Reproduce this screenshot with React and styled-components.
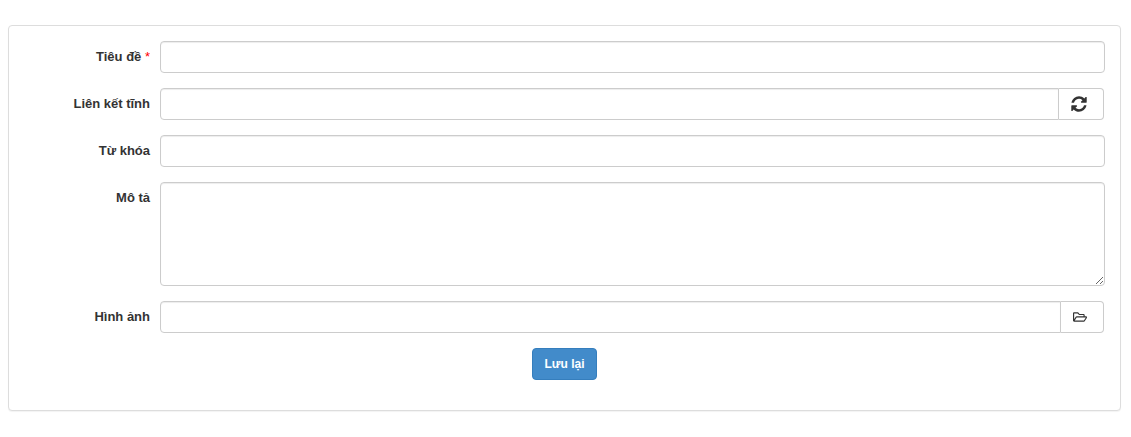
import React from 'react'
import styled, { createGlobalStyle } from 'styled-components';
import { FaRegFolderOpen } from 'react-icons/fa';

const GlobalStyle = createGlobalStyle`
    * {
        box-sizing: border-box;
    }
    body {
        margin: 0;
        background: #fff;
        font-family: "Liberation Sans", Arial, sans-serif;
        font-size: 13px;
        color: #333;
    }
`;

const Page = styled.div`
    padding: 25px 10px 26px 8px;
`;

const Panel = styled.form`
    height: 386px;
    padding: 15px 15px 0;
    background: #fff;
    border: 1px solid #ddd;
    border-radius: 4px;
    box-shadow: 0 1px 1px rgba(0, 0, 0, 0.05);
    display: flex;
    flex-direction: column;
    gap: 15px;
`;

const Row = styled.div`
    display: flex;
`;

const Label = styled.label`
    width: 126px;
    padding-top: 7px;
    line-height: 18px;
    text-align: right;
    font-weight: 700;
    flex: none;
`;

const Field = styled.div`
    flex: 1;
    margin-left: 10px;
    display: flex;
    min-width: 0;
`;

const TextInput = styled.input`
    flex: 1;
    min-width: 0;
    height: 32px;
    padding: 6px 12px;
    background: #fff;
    border: 1px solid #ccc;
    border-radius: ${(p) => (p.$grouped ? '4px 0 0 4px' : '4px')};
    box-shadow: inset 0 1px 1px rgba(0, 0, 0, 0.075);
    font: inherit;
    outline: none;
`;

const TextArea = styled.textarea`
    flex: 1;
    display: block;
    height: 104px;
    padding: 6px 12px;
    background: #fff;
    border: 1px solid #ccc;
    border-radius: 4px;
    box-shadow: inset 0 1px 1px rgba(0, 0, 0, 0.075);
    font: inherit;
    outline: none;
`;

const Addon = styled.span`
    flex: none;
    width: ${(p) => p.$width}px;
    height: 32px;
    margin-right: 1px;
    padding-right: 4px;
    background: #fff;
    border: 1px solid #ccc;
    border-left: 0;
    border-radius: 0 4px 4px 0;
    display: flex;
    align-items: center;
    justify-content: center;
    color: #333;
    font-size: ${(p) => p.$size}px;

    svg {
        display: block;
    }
`;

const Required = styled.span`
    color: #f00;
    font-weight: 400;
`;

const Actions = styled.div`
    display: flex;
    justify-content: center;
`;

const SaveButton = styled.button`
    width: 65px;
    height: 32px;
    padding: 0;
    background: #428bca;
    border: 1px solid #357ebd;
    border-radius: 4px;
    color: #fff;
    font: 700 12px "Liberation Sans", Arial, sans-serif;
`;

const RefreshIcon = () => (
    <svg width="18" height="18" viewBox="0 0 1792 1792" fill="currentColor">
        <path d="M1639 1056q0 5-1 7-64 268-268 434.500t-478 166.500q-146 0-282.500-55t-243.500-157l-129 129q-19 19-45 19t-45-19-19-45v-448q0-26 19-45t45-19h448q26 0 45 19t19 45-19 45l-137 137q71 66 161 102t187 36q134 0 250-65t186-179q11-17 53-117 8-23 30-23h192q13 0 22.500 9.500t9.500 22.500zm25-800v448q0 26-19 45t-45 19h-448q-26 0-45-19t-19-45 19-45l138-138q-148-137-349-137-134 0-250 65t-186 179q-11 17-53 117-8 23-30 23h-199q-13 0-22.500-9.500t-9.500-22.500v-7q65-268 270-434.500t480-166.500q146 0 284 55.500t245 156.500l130-129q19-19 45-19t45 19 19 45z" />
    </svg>
);

export default function App() {
    return (
        <Page>
            <GlobalStyle />
            <Panel>
                <Row>
                    <Label>Tiêu đề <Required>*</Required></Label>
                    <Field><TextInput /></Field>
                </Row>
                <Row>
                    <Label>Liên kết tĩnh</Label>
                    <Field>
                        <TextInput $grouped />
                        <Addon $width={45}><RefreshIcon /></Addon>
                    </Field>
                </Row>
                <Row>
                    <Label>Từ khóa</Label>
                    <Field><TextInput /></Field>
                </Row>
                <Row>
                    <Label>Mô tả</Label>
                    <Field><TextArea /></Field>
                </Row>
                <Row>
                    <Label>Hình ảnh</Label>
                    <Field>
                        <TextInput $grouped />
                        <Addon $width={43} $size={14}><FaRegFolderOpen /></Addon>
                    </Field>
                </Row>
                <Actions>
                    <SaveButton type="button">Lưu lại</SaveButton>
                </Actions>
            </Panel>
        </Page>
    );
}
